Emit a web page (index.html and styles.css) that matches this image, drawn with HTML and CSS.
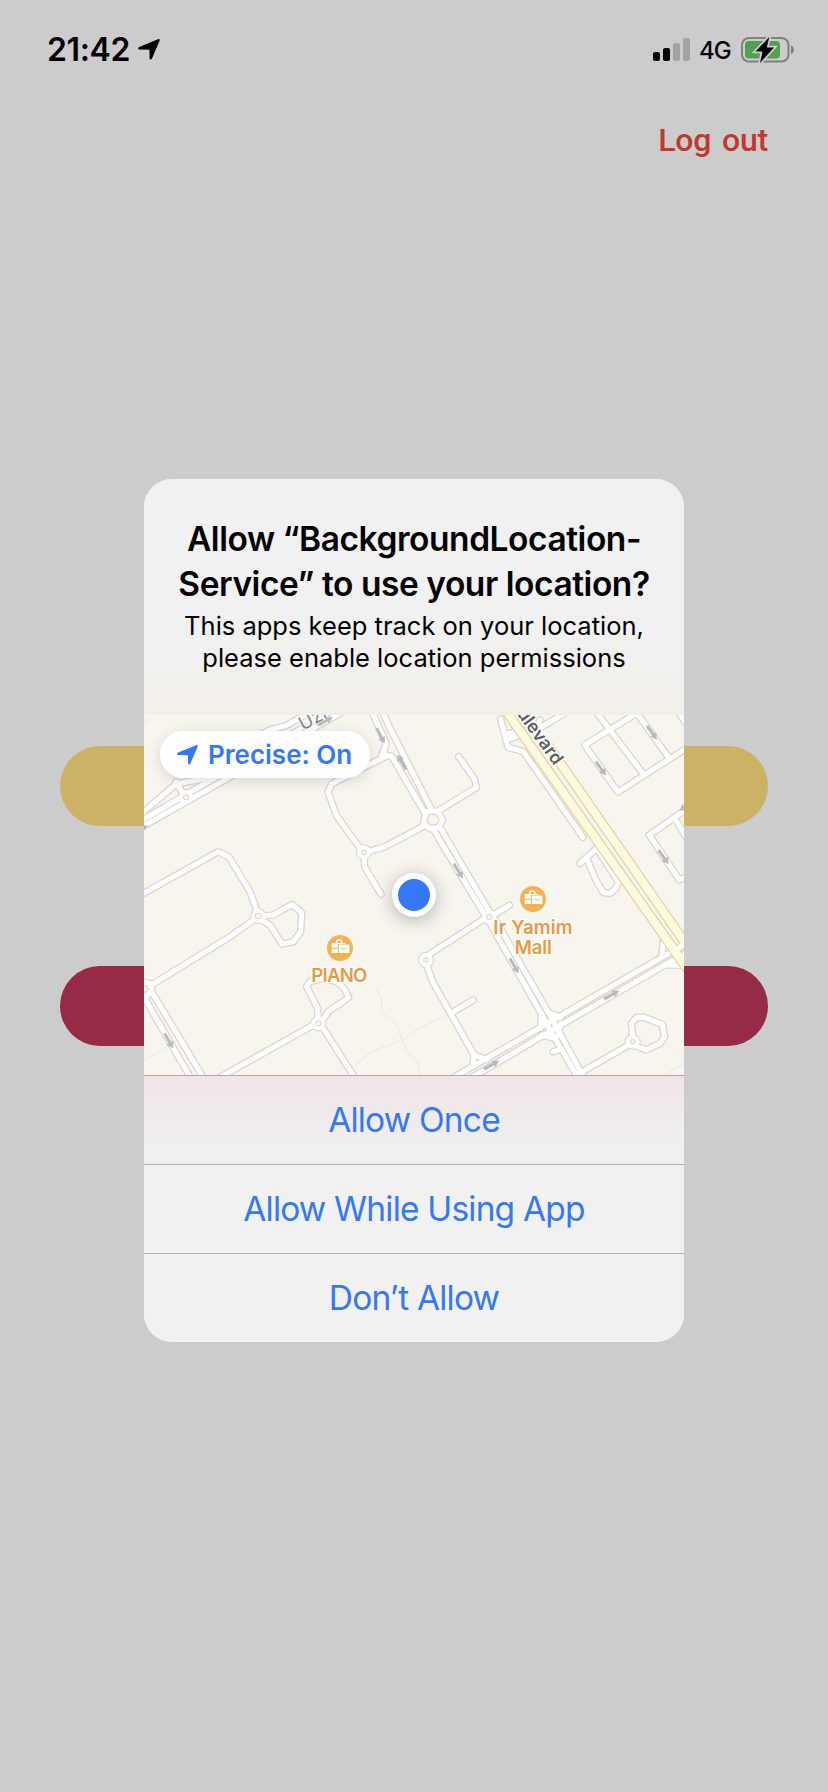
FILE: index.html
```html
<!DOCTYPE html>
<html lang="en">
<head>
<meta charset="utf-8">
<title>Location permission</title>
<link rel="stylesheet" href="styles.css">
</head>
<body>
<div class="screen">
  <header class="status">
    <div class="status-left">
      <span class="time">21:42</span>
      <svg class="arrow" viewBox="0 0 22 21" width="22" height="21"><path d="M20 .2c1.200-.5 2.100.5 1.600 1.600L14 19.500c-.6 1.400-2.500 1.100-2.500-.5V10.800L1.700 10.600c-1.800 0-2.100-2-.5-2.700z"/></svg>
    </div>
    <div class="status-right">
      <svg class="signal" viewBox="0 0 37 23" width="37" height="23">
        <rect x="0" y="14" width="7" height="9" rx="2"/><rect x="10" y="10" width="7" height="13" rx="2"/>
        <g fill="#a3a3a3"><rect x="20" y="5" width="7" height="18" rx="2"/><rect x="30" y="0" width="7" height="23" rx="2"/></g>
      </svg>
      <span class="net">4G</span>
      <svg class="battery" viewBox="0 0 54 28" width="54" height="28">
        <rect x="1" y="2" width="46.500" height="23.500" rx="7" fill="none" stroke="#808080" stroke-width="2"/>
        <path d="M50 9.500c4 1.500 4 7 0 8.500z" fill="#808080"/>
        <rect x="4" y="5" width="35" height="17.500" rx="4" fill="#519f51"/>
        <path d="M28.300 1 14.500 15.500h7L19 27 33 11.500h-7.200z" fill="#000" stroke="#ccc" stroke-width="3.500" paint-order="stroke"/>
      </svg>
    </div>
  </header>
  <nav class="nav"><a class="logout">Log out</a></nav>
  <main class="actions">
    <div class="pill gold"></div>
    <div class="pill wine"></div>
  </main>
</div>
<div class="overlay">
  <section class="alert">
    <div class="head">
      <h1>Allow “BackgroundLocation-<br>Service” to use your location?</h1>
      <p>This apps keep track on your location,<br>please enable location permissions</p>
    </div>
    <div class="map">
      <svg class="map-art" viewBox="12 15 1620 1080" width="540" height="360">
        <defs>
          <g id="thin" fill="none" stroke-linecap="round" stroke-linejoin="round">
            <!-- north-west streets -->
            <path d="M0 315 108 222 280 190 600 10"/>
            <path d="M0 334 130 258 480 58"/>
            <path d="M0 354 145 272 520 58"/>
            <path d="M108 216 132 255"/>
            <path d="M300 100 390 60 440 46 500 12"/>
            <path d="M0 556 235 425 266 440 330 545 352 605"/>
            <path d="M740 138 660 178 575 222 564 246 590 318 660 415"/>
            <path d="M672 440 674 470 723 553"/>
            <path d="M685 425 735 410 858 345"/>
            <path d="M698 10 738 98 730 132"/>
            <path d="M730 10 745 45 875 300"/>
            <path d="M738 105 725 138 755 138 858 315"/>
            <!-- central roundabout -->
            <path d="M858 305 893 303 908 330 896 352 870 356 850 342Z"/>
            <path d="M895 302 1009 233 1004 208 956 140"/>
            <path d="M880 358 1040 625"/>
            <path d="M900 352 1052 612"/>
            <path d="M1050 640 1212 925 1230 960 1312 1100"/>
            <path d="M1066 630 1235 925 1330 1100"/>
            <path d="M1060 615 1108 586"/>
            <path d="M1035 625 860 738"/>
            <path d="M858 760 878 815 1002 1035 998 1070"/>
            <path d="M936 908 1000 870"/>
            <path d="M1002 1035 1040 1048"/>
            <!-- diagonal street -->
            <path d="M945 1100 1240 930 1560 745 1650 695"/>
            <path d="M1000 1100 1280 935 1580 762 1660 720"/>
            <path d="M1570 695 1565 740M1580 765 1640 766"/>
            <path d="M1205 910 1202 955M1225 908 1262 922M1262 940 1255 975M1205 975 1245 985M1240 1025 1265 1018"/>
            <path d="M1322 1088 1475 1000"/>
            <path d="M1478 980 1474 940 1490 922 1512 922 1567 943 1574 980 1560 1000 1518 1020 1488 1008"/>
            <!-- west streets -->
            <path d="M355 620 400 615 456 583 485 608 482 665 460 695 426 702 390 645 355 625"/>
            <path d="M340 630 270 680 30 828"/>
            <path d="M5 850 150 1100M35 845 188 1100M5 815 30 820 35 840 20 858"/>
            <path d="M520 945 240 1102"/>
            <path d="M535 928 533 895 500 830 510 815 550 805 590 815 612 835 626 862 565 905 545 935"/>
            <path d="M550 955 642 1100"/>
            <!-- north-east blocks -->
            <path d="M1082 28 1104 112 1150 125 1329 382"/>
            <path d="M1095 72 1150 62M1100 88 1150 75M1190 60 1270 12M1190 60 1200 30"/>
            <path d="M1372 10 1508 190"/>
            <path d="M1490 10 1334 105 1434 246 1650 108"/>
            <path d="M1495 15 1584 140"/>
            <path d="M1618 10 1635 35"/>
            <path d="M1650 290 1528 375 1618 510 1640 500M1606 328 1640 385"/>
            <path d="M1320 460 1370 415 1435 515 1428 535 1410 550 1390 548 1370 515 1342 450M1370 415 1372 395"/>
          </g>
          <g id="rings">
            <circle cx="138" cy="262" r="14"/><circle cx="672" cy="427" r="14"/><circle cx="355" cy="618" r="14"/>
            <circle cx="535" cy="940" r="14"/><circle cx="1048" cy="621" r="14"/><circle cx="858" cy="750" r="14"/>
            <circle cx="1478" cy="995" r="14"/>
          </g>
          <path id="dir" d="M0-4H32V-10L50 0 32 10V4H0Z" fill="#bababa" stroke="#aaa" stroke-width="1.500" stroke-dasharray="3 2"/>
        </defs>
        <rect x="0" y="0" width="1640" height="1110" fill="#f8f5ee"/>
        <g fill="none" stroke="#ebe7df" stroke-width="3">
          <path d="M707 837 725 868 724 903 770 945 800 1025 832 1055 840 1100M640 1070 692 1025 775 995 850 948 930 912M12 1050 90 1005M1570 1097 1640 1055M12 40 35 18"/>
        </g>
        <use href="#thin" stroke="#dcd7ce" stroke-width="23"/>
        <use href="#rings" fill="#fff" stroke="#dcd7ce" stroke-width="21"/>
        <use href="#thin" stroke="#fff" stroke-width="15"/>
        <use href="#rings" fill="#f8f5ee" stroke="#fff" stroke-width="14"/>
        <g fill="none" stroke="#d7d0c5" stroke-width="3">
          <circle cx="138" cy="262" r="8"/><circle cx="672" cy="427" r="7"/><circle cx="355" cy="618" r="9"/><circle cx="535" cy="940" r="8"/><circle cx="1048" cy="621" r="8"/><circle cx="858" cy="750" r="7"/><circle cx="1478" cy="995" r="7"/>
        </g>
        <!-- boulevard carriageways -->
        <g fill="none" stroke-linejoin="round">
          <path d="M1096 0 1646 782" stroke="#f0c8a0" stroke-width="31"/>
          <path d="M1225 108 1660 734" stroke="#f0c8a0" stroke-width="31"/>
          <path d="M1096 0 1646 782" stroke="#fdfbdd" stroke-width="24"/>
          <path d="M1225 108 1660 734" stroke="#fdfbdd" stroke-width="24"/>
        </g>
        <path d="M1604 720 1650 695M1618 744 1660 720" stroke="#fff" stroke-width="15"/>
        <path d="M1585 696 1646 782" stroke="#fdfbdd" stroke-width="24"/>
        <use href="#dir" transform="translate(710 55) rotate(62)"/>
        <use href="#dir" transform="translate(798 178) rotate(-120)"/>
        <use href="#dir" transform="translate(942 462) rotate(58)"/>
        <use href="#dir" transform="translate(74 971) rotate(60)"/>
        <use href="#dir" transform="translate(1110 746) rotate(60)"/>
        <use href="#dir" transform="translate(1393 867) rotate(-29)"/>
        <use href="#dir" transform="translate(1033 1077) rotate(-29)"/>
        <use href="#dir" transform="translate(1521 48) rotate(54)"/>
        <use href="#dir" transform="translate(1368 155) rotate(54)"/>
        <use href="#dir" transform="translate(1556 421) rotate(54)"/>
        <use href="#dir" transform="translate(1660 273) rotate(145)"/>
        <path d="M8 345 23 347 8 366Z" fill="#b5b5b5"/>
        <g class="street">
          <text class="uzi" transform="translate(488 62) rotate(-27)">Uzi H</text>
          <text class="blvd" text-anchor="end" transform="translate(1243 168) rotate(54)">Boulevard</text>
        </g>
        <use href="#dir" transform="translate(534 46) rotate(-29)"/>
        <g id="shop">
          <circle cx="600" cy="714" r="39" fill="#f3b154"/>
          <path d="M590 699v-4q0-5 5-5h5q5 0 5 5v4" fill="none" stroke="#fff" stroke-width="5"/>
          <path d="M575 699h42v30h-42z" fill="#fff"/>
          <path d="M575 715h20M595 730v-27h35" fill="none" stroke="#f3b154" stroke-width="3"/>
          <path d="M597 704h31v25h-31z" fill="#fff"/>
          <path d="M603 713q9 10 18 0" fill="none" stroke="#f3b154" stroke-width="3"/>
        </g>
        <use href="#shop" x="579" y="-147"/>
        <g class="poi" text-anchor="middle">
          <text x="598" y="816" textLength="168">PIANO</text>
          <text x="1179" y="672" textLength="238">Ir Yamim</text>
          <text x="1180" y="732" textLength="112">Mall</text>
        </g>
      </svg>
      <div class="me"></div>
      <div class="precise">
        <svg viewBox="0 0 22 21" width="21" height="20"><path fill="#3478f6" d="M20 .2c1.200-.5 2.100.5 1.600 1.600L14 19.500c-.6 1.400-2.500 1.100-2.500-.5V10.800L1.700 10.600c-1.800 0-2.100-2-.5-2.700z"/></svg>
        <span>Precise: On</span>
      </div>
    </div>
    <div class="buttons">
      <a class="b1">Allow Once</a>
      <a class="b2">Allow While Using App</a>
      <a class="b3">Don’t Allow</a>
    </div>
  </section>
</div>
</body>
</html>
```
FILE: styles.css
```css
* { box-sizing: border-box; }
body { margin: 0; font-family: Inter, "Liberation Sans", sans-serif; background: #ccc; }
.screen { width: 828px; height: 1792px; background: #ccc; overflow: hidden; }
.status { display: flex; justify-content: space-between; height: 100px; padding: 0 33px 0 47px; color: #000; }
.status-left, .status-right { display: flex; align-items: flex-start; }
.time { font-size: 32px; font-weight: 600; line-height: 40px; margin-top: 30px; letter-spacing: -0.35px; }
.arrow { margin: 39px 0 0 8px; }
.signal { margin-top: 38px; }
.net { font-size: 24px; font-weight: 500; line-height: 30px; margin: 36px 10px 0 9px; letter-spacing: -0.8px; }
.battery { margin-top: 36px; }
.nav { display: flex; justify-content: flex-end; height: 80px; padding: 19px 60px 0 0; }
.logout { font-family: Roboto, sans-serif; font-weight: 500; font-size: 32px; line-height: 42px; word-spacing: 3px; letter-spacing: -0.2px; color: #c0392f; }
.actions { display: flex; flex-direction: column; gap: 140px; padding: 566px 60px 0; }
.pill { height: 80px; border-radius: 40px; }
.gold { background: #cbb264; }
.wine { background: #972a45; }

.overlay { position: absolute; inset: 0; display: flex; justify-content: center; align-items: flex-start; padding-top: 479px; height: 1792px; }
.alert { width: 540px; height: 863px; border-radius: 28px; overflow: hidden; background: #f1f1f1; }
.head { height: 236px; padding-top: 38px; text-align: center; color: #000; background: linear-gradient(#f1f1f1 0 65%, #f2efe8); white-space: nowrap; }
h1 { margin: 0; font-size: 33.500px; font-weight: 600; line-height: 44.500px; letter-spacing: -0.45px; }
p { margin: 4px 0 0; font-size: 25.500px; line-height: 32px; }
.map { position: relative; height: 360px; }
.map-art { display: block; }
.street { font-family: Inter, sans-serif; stroke: #fff; stroke-width: 8; paint-order: stroke; stroke-linejoin: round; }
.uzi { font-size: 56px; fill: #858585; }
.blvd { font-size: 54px; font-weight: 600; fill: #5f5f5f; }
.poi { font-family: Inter, sans-serif; font-size: 56px; font-weight: 600; fill: #e99a45; stroke: #fff; stroke-width: 8; paint-order: stroke; stroke-linejoin: round; }
.me { position: absolute; left: 248px; top: 158px; width: 44px; height: 44px; border: 6px solid #fff; border-radius: 50%; background: #3478f6; box-shadow: 0 3px 18px rgba(0,0,0,.28); }
.precise { position: absolute; left: 16px; top: 16px; width: 210px; height: 47px; border-radius: 24px; background: #fff; box-shadow: 0 3px 14px rgba(0,0,0,.13); display: flex; align-items: center; padding-left: 17px; gap: 10px; color: #3478f6; font-size: 26px; font-weight: 600; white-space: nowrap; }
.buttons { display: flex; flex-direction: column; height: 267px; background: linear-gradient(#f1e4e8 0, #f0ebec 16%, #f1f1f1 38%); }
.buttons a { height: 89px; border-top: 1px solid #b2b2b2; text-align: center; font-size: 33.500px; line-height: 89px; letter-spacing: -0.8px; color: #3478f6; }
.buttons .b1 { border-top-color: #b9a2aa; }
```
